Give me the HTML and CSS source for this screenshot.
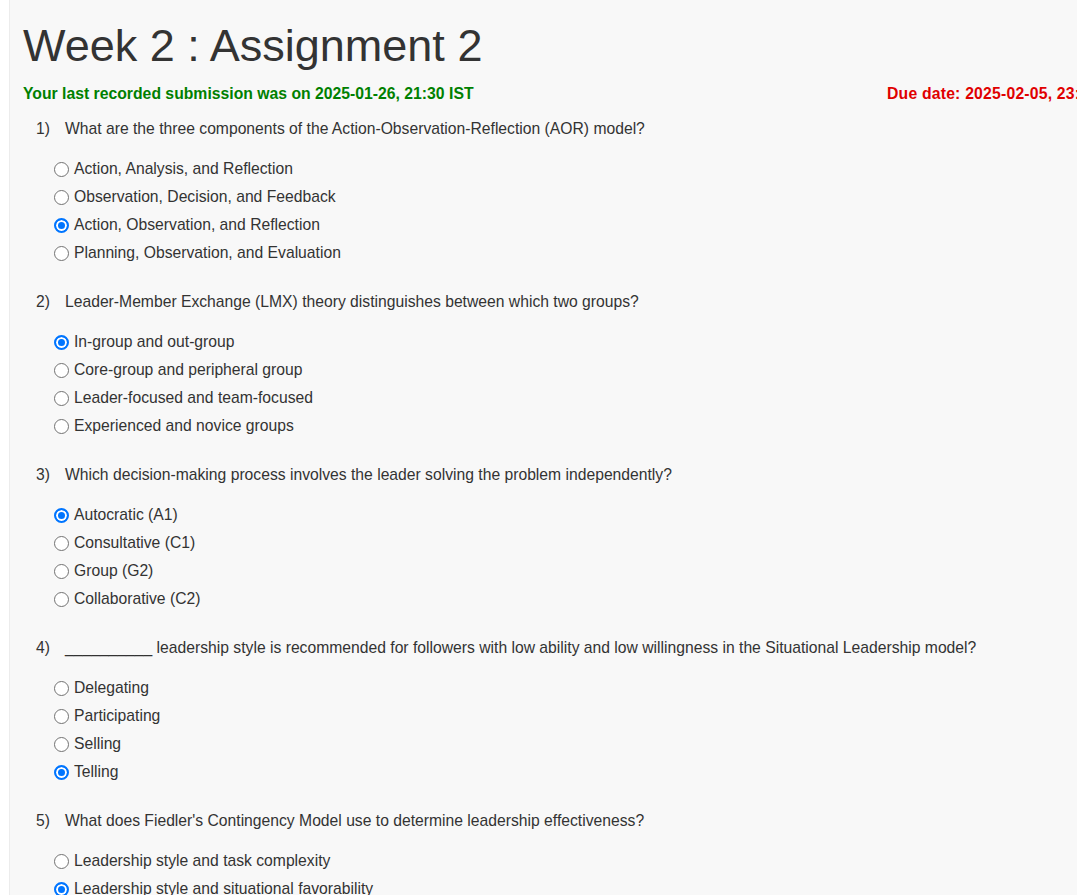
FILE: index.html
```html
<!DOCTYPE html>
<html>
<head>
<meta charset="utf-8">
<link rel="stylesheet" href="styles.css">
</head>
<body>
<div class="page">
  <div class="panel">
    <h1 class="title">Week 2 : Assignment 2</h1>
    <div class="meta">
      <span class="last">Your last recorded submission was on 2025-01-26, 21:30 IST</span>
      <span class="due">Due date: 2025-02-05, 23:59 IST.</span>
    </div>

    <div class="question">
      <div class="qtext"><span class="qnum">1)</span><span>What are the three components of the Action-Observation-Reflection (AOR) model?</span></div>
      <div class="options">
        <label class="opt"><input type="radio" name="q1"><span>Action, Analysis, and Reflection</span></label>
        <label class="opt"><input type="radio" name="q1"><span>Observation, Decision, and Feedback</span></label>
        <label class="opt"><input type="radio" name="q1" checked><span>Action, Observation, and Reflection</span></label>
        <label class="opt"><input type="radio" name="q1"><span>Planning, Observation, and Evaluation</span></label>
      </div>
    </div>

    <div class="question">
      <div class="qtext"><span class="qnum">2)</span><span>Leader-Member Exchange (LMX) theory distinguishes between which two groups?</span></div>
      <div class="options">
        <label class="opt"><input type="radio" name="q2" checked><span>In-group and out-group</span></label>
        <label class="opt"><input type="radio" name="q2"><span>Core-group and peripheral group</span></label>
        <label class="opt"><input type="radio" name="q2"><span>Leader-focused and team-focused</span></label>
        <label class="opt"><input type="radio" name="q2"><span>Experienced and novice groups</span></label>
      </div>
    </div>

    <div class="question">
      <div class="qtext"><span class="qnum">3)</span><span>Which decision-making process involves the leader solving the problem independently?</span></div>
      <div class="options">
        <label class="opt"><input type="radio" name="q3" checked><span>Autocratic (A1)</span></label>
        <label class="opt"><input type="radio" name="q3"><span>Consultative (C1)</span></label>
        <label class="opt"><input type="radio" name="q3"><span>Group (G2)</span></label>
        <label class="opt"><input type="radio" name="q3"><span>Collaborative (C2)</span></label>
      </div>
    </div>

    <div class="question">
      <div class="qtext"><span class="qnum">4)</span><span>__________ leadership style is recommended for followers with low ability and low willingness in the Situational Leadership model?</span></div>
      <div class="options">
        <label class="opt"><input type="radio" name="q4"><span>Delegating</span></label>
        <label class="opt"><input type="radio" name="q4"><span>Participating</span></label>
        <label class="opt"><input type="radio" name="q4"><span>Selling</span></label>
        <label class="opt"><input type="radio" name="q4" checked><span>Telling</span></label>
      </div>
    </div>

    <div class="question">
      <div class="qtext"><span class="qnum">5)</span><span>What does Fiedler's Contingency Model use to determine leadership effectiveness?</span></div>
      <div class="options">
        <label class="opt"><input type="radio" name="q5"><span>Leadership style and task complexity</span></label>
        <label class="opt"><input type="radio" name="q5" checked><span>Leadership style and situational favorability</span></label>
        <label class="opt"><input type="radio" name="q5"><span>Leader-member relations and task structure</span></label>
        <label class="opt"><input type="radio" name="q5"><span>Position power and follower readiness</span></label>
      </div>
    </div>
  </div>
</div>
</body>
</html>
```
FILE: styles.css
```css
html, body {
  margin: 0;
  padding: 0;
  overflow: hidden;
  background: #ffffff;
}
body {
  font-family: "Liberation Sans", Arial, sans-serif;
  color: #333333;
}
.page {
  padding-left: 9px;
  width: 1200px;
}
.panel {
  background: #f8f8f8;
  border-left: 1px solid #ececec;
  padding: 18px 0 40px 13px;
  min-height: 1000px;
}
.title {
  font-size: 45px;
  font-weight: normal;
  margin: 0;
  line-height: 56px;
  color: #333333;
}
.meta {
  display: grid;
  grid-template-columns: 864px auto;
  font-size: 15.75px;
  font-weight: bold;
  margin-top: 10px;
  line-height: 20px;
  white-space: nowrap;
}
.last { color: #008000; }
.due { color: #e00000; letter-spacing: 0.2px; }
.question {
  margin-top: 15px;
  padding-left: 13px;
  margin-bottom: 25px;
}
.qtext {
  display: flex;
  font-size: 15.7px;
  line-height: 20px;
}
.qnum {
  width: 29px;
  flex: none;
}
.options {
  margin-top: 16px;
  padding-left: 18px;
  display: flex;
  flex-direction: column;
}
.opt {
  display: flex;
  align-items: center;
  height: 28px;
  font-size: 15.7px;
}
.opt input {
  -webkit-appearance: none;
  appearance: none;
  box-sizing: border-box;
  margin: 0 5px 0 0;
  width: 15px;
  height: 15px;
  flex: none;
  border: 1.6px solid #727272;
  border-radius: 50%;
  background: #ffffff;
}
.opt input:checked {
  border: 2px solid #0075ff;
  background: #0075ff;
  box-shadow: inset 0 0 0 2px #ffffff;
}
```
